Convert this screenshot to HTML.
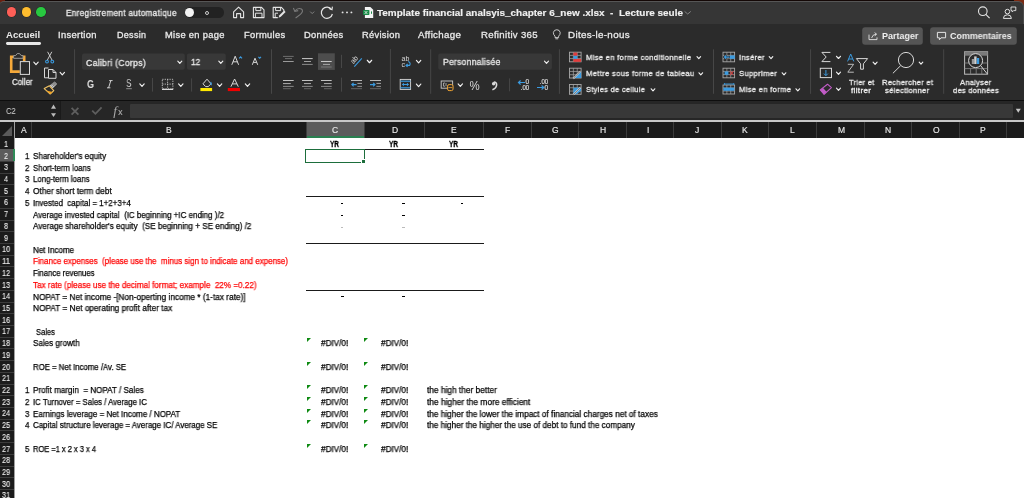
<!DOCTYPE html><html><head><meta charset="utf-8"><style>
*{margin:0;padding:0;box-sizing:border-box}
html,body{width:1024px;height:498px;overflow:hidden;background:#fff;font-family:"Liberation Sans",sans-serif}
.a{position:absolute}
.t{position:absolute;white-space:pre;line-height:1;transform-origin:0 0;will-change:transform}
svg{position:absolute;overflow:visible;will-change:transform}
</style></head><body>
<div class="a" style="left:0;top:0;width:1024px;height:24px;background:#363636"></div>
<div class="a" style="left:0;top:0;width:1024px;height:1.3px;background:#140806"></div>
<div class="a" style="left:0;top:0;width:5px;height:2px;background:#6a2010"></div>
<div class="a" style="left:1014px;top:0;width:10px;height:5px;background:#7a2a12"></div>
<div class="a" style="left:0;top:1.3px;width:1024px;height:23px;background:#363636;border-top:0.8px solid #565656;border-right:1px solid #4a4a4a;border-radius:4px 6px 0 0"></div>
<div class="a" style="left:0;top:24px;width:1024px;height:76px;background:#2b2b2b"></div>
<div class="a" style="left:6.8px;top:7.3px;width:9.6px;height:9.6px;border-radius:50%;background:#fe5f57;box-shadow:0 0 0 0.5px rgba(0,0,0,0.35)"></div>
<div class="a" style="left:21.599999999999998px;top:7.3px;width:9.6px;height:9.6px;border-radius:50%;background:#febc2e;box-shadow:0 0 0 0.5px rgba(0,0,0,0.35)"></div>
<div class="a" style="left:36.2px;top:7.3px;width:9.6px;height:9.6px;border-radius:50%;background:#28c840;box-shadow:0 0 0 0.5px rgba(0,0,0,0.35)"></div>
<div class="t" style="left:65.50px;top:9.12px;font-size:8.6px;font-weight:normal;color:#e6e6e6;transform:scaleX(0.9465);-webkit-text-stroke:0.35px #e6e6e6;letter-spacing:0.35px;">Enregistrement automatique</div>
<div class="a" style="left:184.8px;top:7px;width:39.4px;height:10.6px;border-radius:5.3px;background:#222"></div>
<div class="a" style="left:184.9px;top:7.5px;width:9.4px;height:9.4px;border-radius:50%;background:#f4f4f4"></div>
<div class="a" style="left:205px;top:10.5px;width:4px;height:4px;border-radius:50%;border:1px solid #ccc"></div>
<div class="t" style="left:377.00px;top:8.26px;font-size:9.5px;font-weight:bold;color:#f0f0f0;transform:scaleX(1.0467);-webkit-text-stroke:0.15px #f0f0f0;">Template financial analsyis_chapter 6_new .xlsx  -  Lecture seule</div>
<div class="t" style="left:6.25px;top:30.16px;font-size:9.5px;font-weight:bold;color:#e8e8e8;transform:scaleX(1.0104);">Accueil</div>
<div class="t" style="left:58.20px;top:30.58px;font-size:9px;font-weight:normal;color:#e8e8e8;transform:scaleX(1.0420);-webkit-text-stroke:0.3px #e8e8e8;letter-spacing:0.3px;">Insertion</div>
<div class="t" style="left:116.80px;top:30.58px;font-size:9px;font-weight:normal;color:#e8e8e8;transform:scaleX(0.9962);-webkit-text-stroke:0.3px #e8e8e8;letter-spacing:0.3px;">Dessin</div>
<div class="t" style="left:165.30px;top:30.58px;font-size:9px;font-weight:normal;color:#e8e8e8;transform:scaleX(1.0357);-webkit-text-stroke:0.3px #e8e8e8;letter-spacing:0.3px;">Mise en page</div>
<div class="t" style="left:243.60px;top:30.58px;font-size:9px;font-weight:normal;color:#e8e8e8;transform:scaleX(1.0370);-webkit-text-stroke:0.3px #e8e8e8;letter-spacing:0.3px;">Formules</div>
<div class="t" style="left:304.00px;top:30.58px;font-size:9px;font-weight:normal;color:#e8e8e8;transform:scaleX(1.0383);-webkit-text-stroke:0.3px #e8e8e8;letter-spacing:0.3px;">Données</div>
<div class="t" style="left:361.70px;top:30.58px;font-size:9px;font-weight:normal;color:#e8e8e8;transform:scaleX(1.0346);-webkit-text-stroke:0.3px #e8e8e8;letter-spacing:0.3px;">Révision</div>
<div class="t" style="left:418.30px;top:30.58px;font-size:9px;font-weight:normal;color:#e8e8e8;transform:scaleX(1.0758);-webkit-text-stroke:0.3px #e8e8e8;letter-spacing:0.3px;">Affichage</div>
<div class="t" style="left:481.40px;top:30.58px;font-size:9px;font-weight:normal;color:#e8e8e8;transform:scaleX(1.0648);-webkit-text-stroke:0.3px #e8e8e8;letter-spacing:0.3px;">Refinitiv 365</div>
<div class="t" style="left:567.60px;top:30.58px;font-size:9px;font-weight:normal;color:#e8e8e8;transform:scaleX(1.0875);-webkit-text-stroke:0.3px #e8e8e8;letter-spacing:0.3px;">Dites-le-nous</div>
<div class="a" style="left:6.2px;top:42.2px;width:34.6px;height:2.7px;border-radius:1.4px;background:#e8e8e8"></div>
<div class="a" style="left:0;top:100px;width:1024px;height:1.4px;background:#0e0e0e"></div>
<div class="a" style="left:0;top:101px;width:1024px;height:18.5px;background:#262626"></div>
<div class="a" style="left:0;top:101px;width:60px;height:18.5px;background:#202020"></div>
<div class="t" style="left:5.50px;top:106.16px;font-size:9.5px;font-weight:normal;color:#d8d8d8;transform:scaleX(0.7979);">C2</div>
<div class="a" style="left:129.7px;top:103.8px;width:883.6px;height:14px;background:#383838;border-radius:1px"></div>
<div class="a" style="left:0;top:119.5px;width:1024px;height:2.3px;background:#c8c8c8"></div>
<div class="a" style="left:0;top:121.8px;width:1024px;height:15.9px;background:#1b1b1b"></div>
<div class="a" style="left:0;top:137.67px;width:14px;height:361px;background:#1b1b1b"></div>
<div class="a" style="left:14px;top:121.8px;width:1px;height:377px;background:#a0a0a0"></div>
<svg style="left:0;top:121.8px" width="14" height="16"><polygon points="2,14 12,4 12,14" fill="#5a5a5a"/></svg>
<div class="a" style="left:306.1px;top:121.8px;width:57.9px;height:15.9px;background:#5c5c5c"></div>
<div class="a" style="left:306.1px;top:136.4px;width:57.9px;height:1.3px;background:#2a8050"></div>
<div class="a" style="left:31.20px;top:121.8px;width:1px;height:15.9px;background:#3c3c3c"></div>
<div class="t" style="left:20.55px;top:126.40px;font-size:8.5px;font-weight:normal;color:#e8e8e8;-webkit-text-stroke:0.15px #e8e8e8;">A</div>
<div class="a" style="left:305.60px;top:121.8px;width:1px;height:15.9px;background:#3c3c3c"></div>
<div class="t" style="left:166.10px;top:126.40px;font-size:8.5px;font-weight:normal;color:#e8e8e8;-webkit-text-stroke:0.15px #e8e8e8;">B</div>
<div class="a" style="left:363.50px;top:121.8px;width:1px;height:15.9px;background:#3c3c3c"></div>
<div class="t" style="left:332.25px;top:126.40px;font-size:8.5px;font-weight:normal;color:#e8e8e8;-webkit-text-stroke:0.15px #e8e8e8;">C</div>
<div class="a" style="left:424.20px;top:121.8px;width:1px;height:15.9px;background:#3c3c3c"></div>
<div class="t" style="left:391.55px;top:126.40px;font-size:8.5px;font-weight:normal;color:#e8e8e8;-webkit-text-stroke:0.15px #e8e8e8;">D</div>
<div class="a" style="left:483.10px;top:121.8px;width:1px;height:15.9px;background:#3c3c3c"></div>
<div class="t" style="left:451.35px;top:126.40px;font-size:8.5px;font-weight:normal;color:#e8e8e8;-webkit-text-stroke:0.15px #e8e8e8;">E</div>
<div class="a" style="left:530.90px;top:121.8px;width:1px;height:15.9px;background:#3c3c3c"></div>
<div class="t" style="left:504.70px;top:126.40px;font-size:8.5px;font-weight:normal;color:#e8e8e8;-webkit-text-stroke:0.15px #e8e8e8;">F</div>
<div class="a" style="left:578.10px;top:121.8px;width:1px;height:15.9px;background:#3c3c3c"></div>
<div class="t" style="left:552.20px;top:126.40px;font-size:8.5px;font-weight:normal;color:#e8e8e8;-webkit-text-stroke:0.15px #e8e8e8;">G</div>
<div class="a" style="left:626.10px;top:121.8px;width:1px;height:15.9px;background:#3c3c3c"></div>
<div class="t" style="left:599.80px;top:126.40px;font-size:8.5px;font-weight:normal;color:#e8e8e8;-webkit-text-stroke:0.15px #e8e8e8;">H</div>
<div class="a" style="left:673.10px;top:121.8px;width:1px;height:15.9px;background:#3c3c3c"></div>
<div class="t" style="left:647.30px;top:126.40px;font-size:8.5px;font-weight:normal;color:#e8e8e8;-webkit-text-stroke:0.15px #e8e8e8;">I</div>
<div class="a" style="left:720.80px;top:121.8px;width:1px;height:15.9px;background:#3c3c3c"></div>
<div class="t" style="left:694.65px;top:126.40px;font-size:8.5px;font-weight:normal;color:#e8e8e8;-webkit-text-stroke:0.15px #e8e8e8;">J</div>
<div class="a" style="left:767.80px;top:121.8px;width:1px;height:15.9px;background:#3c3c3c"></div>
<div class="t" style="left:742.00px;top:126.40px;font-size:8.5px;font-weight:normal;color:#e8e8e8;-webkit-text-stroke:0.15px #e8e8e8;">K</div>
<div class="a" style="left:816.00px;top:121.8px;width:1px;height:15.9px;background:#3c3c3c"></div>
<div class="t" style="left:789.60px;top:126.40px;font-size:8.5px;font-weight:normal;color:#e8e8e8;-webkit-text-stroke:0.15px #e8e8e8;">L</div>
<div class="a" style="left:863.80px;top:121.8px;width:1px;height:15.9px;background:#3c3c3c"></div>
<div class="t" style="left:837.60px;top:126.40px;font-size:8.5px;font-weight:normal;color:#e8e8e8;-webkit-text-stroke:0.15px #e8e8e8;">M</div>
<div class="a" style="left:911.00px;top:121.8px;width:1px;height:15.9px;background:#3c3c3c"></div>
<div class="t" style="left:885.10px;top:126.40px;font-size:8.5px;font-weight:normal;color:#e8e8e8;-webkit-text-stroke:0.15px #e8e8e8;">N</div>
<div class="a" style="left:958.90px;top:121.8px;width:1px;height:15.9px;background:#3c3c3c"></div>
<div class="t" style="left:932.65px;top:126.40px;font-size:8.5px;font-weight:normal;color:#e8e8e8;-webkit-text-stroke:0.15px #e8e8e8;">O</div>
<div class="a" style="left:1005.90px;top:121.8px;width:1px;height:15.9px;background:#3c3c3c"></div>
<div class="t" style="left:980.10px;top:126.40px;font-size:8.5px;font-weight:normal;color:#e8e8e8;-webkit-text-stroke:0.15px #e8e8e8;">P</div>
<div class="a" style="left:1059.50px;top:121.8px;width:1px;height:15.9px;background:#3c3c3c"></div>
<div class="t" style="left:1030.40px;top:126.40px;font-size:8.5px;font-weight:normal;color:#e8e8e8;-webkit-text-stroke:0.15px #e8e8e8;">Q</div>
<div class="a" style="left:0;top:149.20px;width:14px;height:1px;background:#3c3c3c"></div>
<div class="t" style="left:3.85px;top:139.85px;font-size:9px;font-weight:normal;color:#f4f4f4;transform:scaleX(0.8174);-webkit-text-stroke:0.1px #f4f4f4;">1</div>
<div class="a" style="left:0;top:149.40px;width:14px;height:11.72px;background:#5c5c5c"></div>
<div class="a" style="left:12.6px;top:149.40px;width:2px;height:11.72px;background:#2e8b57"></div>
<div class="a" style="left:0;top:160.92px;width:14px;height:1px;background:#3c3c3c"></div>
<div class="t" style="left:3.85px;top:151.58px;font-size:9px;font-weight:normal;color:#f4f4f4;transform:scaleX(0.8174);-webkit-text-stroke:0.1px #f4f4f4;">2</div>
<div class="a" style="left:0;top:172.64px;width:14px;height:1px;background:#3c3c3c"></div>
<div class="t" style="left:3.85px;top:163.30px;font-size:9px;font-weight:normal;color:#f4f4f4;transform:scaleX(0.8174);-webkit-text-stroke:0.1px #f4f4f4;">3</div>
<div class="a" style="left:0;top:184.36px;width:14px;height:1px;background:#3c3c3c"></div>
<div class="t" style="left:3.85px;top:175.02px;font-size:9px;font-weight:normal;color:#f4f4f4;transform:scaleX(0.8174);-webkit-text-stroke:0.1px #f4f4f4;">4</div>
<div class="a" style="left:0;top:196.08px;width:14px;height:1px;background:#3c3c3c"></div>
<div class="t" style="left:3.85px;top:186.74px;font-size:9px;font-weight:normal;color:#f4f4f4;transform:scaleX(0.8174);-webkit-text-stroke:0.1px #f4f4f4;">5</div>
<div class="a" style="left:0;top:207.80px;width:14px;height:1px;background:#3c3c3c"></div>
<div class="t" style="left:3.85px;top:198.46px;font-size:9px;font-weight:normal;color:#f4f4f4;transform:scaleX(0.8174);-webkit-text-stroke:0.1px #f4f4f4;">6</div>
<div class="a" style="left:0;top:219.52px;width:14px;height:1px;background:#3c3c3c"></div>
<div class="t" style="left:3.85px;top:210.18px;font-size:9px;font-weight:normal;color:#f4f4f4;transform:scaleX(0.8174);-webkit-text-stroke:0.1px #f4f4f4;">7</div>
<div class="a" style="left:0;top:231.24px;width:14px;height:1px;background:#3c3c3c"></div>
<div class="t" style="left:3.85px;top:221.90px;font-size:9px;font-weight:normal;color:#f4f4f4;transform:scaleX(0.8174);-webkit-text-stroke:0.1px #f4f4f4;">8</div>
<div class="a" style="left:0;top:242.96px;width:14px;height:1px;background:#3c3c3c"></div>
<div class="t" style="left:3.85px;top:233.62px;font-size:9px;font-weight:normal;color:#f4f4f4;transform:scaleX(0.8174);-webkit-text-stroke:0.1px #f4f4f4;">9</div>
<div class="a" style="left:0;top:254.68px;width:14px;height:1px;background:#3c3c3c"></div>
<div class="t" style="left:1.80px;top:245.34px;font-size:9px;font-weight:normal;color:#f4f4f4;transform:scaleX(0.8187);-webkit-text-stroke:0.1px #f4f4f4;">10</div>
<div class="a" style="left:0;top:266.40px;width:14px;height:1px;background:#3c3c3c"></div>
<div class="t" style="left:1.80px;top:257.06px;font-size:9px;font-weight:normal;color:#f4f4f4;transform:scaleX(0.8776);-webkit-text-stroke:0.1px #f4f4f4;">11</div>
<div class="a" style="left:0;top:278.12px;width:14px;height:1px;background:#3c3c3c"></div>
<div class="t" style="left:1.80px;top:268.78px;font-size:9px;font-weight:normal;color:#f4f4f4;transform:scaleX(0.8187);-webkit-text-stroke:0.1px #f4f4f4;">12</div>
<div class="a" style="left:0;top:289.84px;width:14px;height:1px;background:#3c3c3c"></div>
<div class="t" style="left:1.80px;top:280.50px;font-size:9px;font-weight:normal;color:#f4f4f4;transform:scaleX(0.8187);-webkit-text-stroke:0.1px #f4f4f4;">13</div>
<div class="a" style="left:0;top:301.56px;width:14px;height:1px;background:#3c3c3c"></div>
<div class="t" style="left:1.80px;top:292.22px;font-size:9px;font-weight:normal;color:#f4f4f4;transform:scaleX(0.8187);-webkit-text-stroke:0.1px #f4f4f4;">14</div>
<div class="a" style="left:0;top:313.28px;width:14px;height:1px;background:#3c3c3c"></div>
<div class="t" style="left:1.80px;top:303.94px;font-size:9px;font-weight:normal;color:#f4f4f4;transform:scaleX(0.8187);-webkit-text-stroke:0.1px #f4f4f4;">15</div>
<div class="a" style="left:0;top:325.00px;width:14px;height:1px;background:#3c3c3c"></div>
<div class="t" style="left:1.80px;top:315.66px;font-size:9px;font-weight:normal;color:#f4f4f4;transform:scaleX(0.8187);-webkit-text-stroke:0.1px #f4f4f4;">16</div>
<div class="a" style="left:0;top:336.72px;width:14px;height:1px;background:#3c3c3c"></div>
<div class="t" style="left:1.80px;top:327.38px;font-size:9px;font-weight:normal;color:#f4f4f4;transform:scaleX(0.8187);-webkit-text-stroke:0.1px #f4f4f4;">17</div>
<div class="a" style="left:0;top:348.44px;width:14px;height:1px;background:#3c3c3c"></div>
<div class="t" style="left:1.80px;top:339.10px;font-size:9px;font-weight:normal;color:#f4f4f4;transform:scaleX(0.8187);-webkit-text-stroke:0.1px #f4f4f4;">18</div>
<div class="a" style="left:0;top:360.16px;width:14px;height:1px;background:#3c3c3c"></div>
<div class="t" style="left:1.80px;top:350.82px;font-size:9px;font-weight:normal;color:#f4f4f4;transform:scaleX(0.8187);-webkit-text-stroke:0.1px #f4f4f4;">19</div>
<div class="a" style="left:0;top:371.88px;width:14px;height:1px;background:#3c3c3c"></div>
<div class="t" style="left:1.80px;top:362.54px;font-size:9px;font-weight:normal;color:#f4f4f4;transform:scaleX(0.8187);-webkit-text-stroke:0.1px #f4f4f4;">20</div>
<div class="a" style="left:0;top:383.60px;width:14px;height:1px;background:#3c3c3c"></div>
<div class="t" style="left:1.80px;top:374.26px;font-size:9px;font-weight:normal;color:#f4f4f4;transform:scaleX(0.8187);-webkit-text-stroke:0.1px #f4f4f4;">21</div>
<div class="a" style="left:0;top:395.32px;width:14px;height:1px;background:#3c3c3c"></div>
<div class="t" style="left:1.80px;top:385.98px;font-size:9px;font-weight:normal;color:#f4f4f4;transform:scaleX(0.8187);-webkit-text-stroke:0.1px #f4f4f4;">22</div>
<div class="a" style="left:0;top:407.04px;width:14px;height:1px;background:#3c3c3c"></div>
<div class="t" style="left:1.80px;top:397.70px;font-size:9px;font-weight:normal;color:#f4f4f4;transform:scaleX(0.8187);-webkit-text-stroke:0.1px #f4f4f4;">23</div>
<div class="a" style="left:0;top:418.76px;width:14px;height:1px;background:#3c3c3c"></div>
<div class="t" style="left:1.80px;top:409.42px;font-size:9px;font-weight:normal;color:#f4f4f4;transform:scaleX(0.8187);-webkit-text-stroke:0.1px #f4f4f4;">24</div>
<div class="a" style="left:0;top:430.48px;width:14px;height:1px;background:#3c3c3c"></div>
<div class="t" style="left:1.80px;top:421.14px;font-size:9px;font-weight:normal;color:#f4f4f4;transform:scaleX(0.8187);-webkit-text-stroke:0.1px #f4f4f4;">25</div>
<div class="a" style="left:0;top:442.20px;width:14px;height:1px;background:#3c3c3c"></div>
<div class="t" style="left:1.80px;top:432.86px;font-size:9px;font-weight:normal;color:#f4f4f4;transform:scaleX(0.8187);-webkit-text-stroke:0.1px #f4f4f4;">26</div>
<div class="a" style="left:0;top:453.92px;width:14px;height:1px;background:#3c3c3c"></div>
<div class="t" style="left:1.80px;top:444.58px;font-size:9px;font-weight:normal;color:#f4f4f4;transform:scaleX(0.8187);-webkit-text-stroke:0.1px #f4f4f4;">27</div>
<div class="a" style="left:0;top:465.64px;width:14px;height:1px;background:#3c3c3c"></div>
<div class="t" style="left:1.80px;top:456.30px;font-size:9px;font-weight:normal;color:#f4f4f4;transform:scaleX(0.8187);-webkit-text-stroke:0.1px #f4f4f4;">28</div>
<div class="a" style="left:0;top:477.36px;width:14px;height:1px;background:#3c3c3c"></div>
<div class="t" style="left:1.80px;top:468.02px;font-size:9px;font-weight:normal;color:#f4f4f4;transform:scaleX(0.8187);-webkit-text-stroke:0.1px #f4f4f4;">29</div>
<div class="a" style="left:0;top:489.08px;width:14px;height:1px;background:#3c3c3c"></div>
<div class="t" style="left:1.80px;top:479.74px;font-size:9px;font-weight:normal;color:#f4f4f4;transform:scaleX(0.8187);-webkit-text-stroke:0.1px #f4f4f4;">30</div>
<div class="a" style="left:0;top:500.80px;width:14px;height:1px;background:#3c3c3c"></div>
<div class="t" style="left:1.80px;top:491.46px;font-size:9px;font-weight:normal;color:#f4f4f4;transform:scaleX(0.8187);-webkit-text-stroke:0.1px #f4f4f4;">31</div>
<div class="t" style="left:25.10px;top:151.90px;font-size:8.5px;font-weight:normal;color:#000;transform:scaleX(0.92);-webkit-text-stroke:0.25px #000;">1</div>
<div class="t" style="left:32.80px;top:151.90px;font-size:8.5px;font-weight:normal;color:#000;transform:scaleX(0.9478);-webkit-text-stroke:0.25px #000;">Shareholder's equity</div>
<div class="t" style="left:25.10px;top:163.62px;font-size:8.5px;font-weight:normal;color:#000;transform:scaleX(0.92);-webkit-text-stroke:0.25px #000;">2</div>
<div class="t" style="left:32.80px;top:163.62px;font-size:8.5px;font-weight:normal;color:#000;transform:scaleX(0.92);-webkit-text-stroke:0.25px #000;">Short-term loans</div>
<div class="t" style="left:25.10px;top:175.34px;font-size:8.5px;font-weight:normal;color:#000;transform:scaleX(0.92);-webkit-text-stroke:0.25px #000;">3</div>
<div class="t" style="left:32.80px;top:175.34px;font-size:8.5px;font-weight:normal;color:#000;transform:scaleX(0.92);-webkit-text-stroke:0.25px #000;">Long-term loans</div>
<div class="t" style="left:25.10px;top:187.06px;font-size:8.5px;font-weight:normal;color:#000;transform:scaleX(0.92);-webkit-text-stroke:0.25px #000;">4</div>
<div class="t" style="left:33.00px;top:187.06px;font-size:8.5px;font-weight:normal;color:#000;transform:scaleX(0.9740);-webkit-text-stroke:0.25px #000;">Other short term debt</div>
<div class="t" style="left:25.10px;top:198.78px;font-size:8.5px;font-weight:normal;color:#000;transform:scaleX(0.92);-webkit-text-stroke:0.25px #000;">5</div>
<div class="t" style="left:33.00px;top:198.78px;font-size:8.5px;font-weight:normal;color:#000;transform:scaleX(0.9321);-webkit-text-stroke:0.25px #000;">Invested  capital = 1+2+3+4</div>
<div class="t" style="left:33.00px;top:210.50px;font-size:8.5px;font-weight:normal;color:#000;transform:scaleX(0.9375);-webkit-text-stroke:0.25px #000;">Average invested capital  (IC beginning +IC ending )/2</div>
<div class="t" style="left:33.00px;top:222.22px;font-size:8.5px;font-weight:normal;color:#000;transform:scaleX(0.9533);-webkit-text-stroke:0.25px #000;">Average shareholder's equity  (SE beginning + SE ending) /2</div>
<div class="t" style="left:33.00px;top:245.66px;font-size:8.5px;font-weight:normal;color:#000;transform:scaleX(0.9432);-webkit-text-stroke:0.25px #000;">Net Income</div>
<div class="t" style="left:33.00px;top:257.38px;font-size:8.5px;font-weight:normal;color:#ff0000;transform:scaleX(0.9369);-webkit-text-stroke:0.25px #ff0000;">Finance expenses  (please use the  minus sign to indicate and expense)</div>
<div class="t" style="left:33.00px;top:269.10px;font-size:8.5px;font-weight:normal;color:#000;transform:scaleX(0.9115);-webkit-text-stroke:0.25px #000;">Finance revenues</div>
<div class="t" style="left:33.00px;top:280.82px;font-size:8.5px;font-weight:normal;color:#ff0000;transform:scaleX(0.9551);-webkit-text-stroke:0.25px #ff0000;">Tax rate (please use the decimal format; example  22% =0.22)</div>
<div class="t" style="left:33.00px;top:292.54px;font-size:8.5px;font-weight:normal;color:#000;transform:scaleX(0.9705);-webkit-text-stroke:0.25px #000;">NOPAT = Net income -[Non-operting income * (1-tax rate)]</div>
<div class="t" style="left:33.00px;top:304.26px;font-size:8.5px;font-weight:normal;color:#000;transform:scaleX(0.9740);-webkit-text-stroke:0.25px #000;">NOPAT = Net operating profit after tax</div>
<div class="t" style="left:35.50px;top:327.70px;font-size:8.5px;font-weight:normal;color:#000;transform:scaleX(0.8888);-webkit-text-stroke:0.25px #000;">Sales</div>
<div class="t" style="left:32.90px;top:339.42px;font-size:8.5px;font-weight:normal;color:#000;transform:scaleX(0.9483);-webkit-text-stroke:0.25px #000;">Sales growth</div>
<div class="t" style="left:33.00px;top:362.86px;font-size:8.5px;font-weight:normal;color:#000;transform:scaleX(0.9172);-webkit-text-stroke:0.25px #000;">ROE = Net Income /Av. SE</div>
<div class="t" style="left:25.20px;top:386.30px;font-size:8.5px;font-weight:normal;color:#000;transform:scaleX(0.92);-webkit-text-stroke:0.25px #000;">1</div>
<div class="t" style="left:33.30px;top:386.30px;font-size:8.5px;font-weight:normal;color:#000;transform:scaleX(0.9506);-webkit-text-stroke:0.25px #000;">Profit margin  = NOPAT / Sales</div>
<div class="t" style="left:25.20px;top:398.02px;font-size:8.5px;font-weight:normal;color:#000;transform:scaleX(0.92);-webkit-text-stroke:0.25px #000;">2</div>
<div class="t" style="left:33.30px;top:398.02px;font-size:8.5px;font-weight:normal;color:#000;transform:scaleX(0.9160);-webkit-text-stroke:0.25px #000;">IC Turnover = Sales / Average IC</div>
<div class="t" style="left:25.20px;top:409.74px;font-size:8.5px;font-weight:normal;color:#000;transform:scaleX(0.92);-webkit-text-stroke:0.25px #000;">3</div>
<div class="t" style="left:33.30px;top:409.74px;font-size:8.5px;font-weight:normal;color:#000;transform:scaleX(0.9389);-webkit-text-stroke:0.25px #000;">Earnings leverage = Net Income / NOPAT</div>
<div class="t" style="left:25.20px;top:421.46px;font-size:8.5px;font-weight:normal;color:#000;transform:scaleX(0.92);-webkit-text-stroke:0.25px #000;">4</div>
<div class="t" style="left:33.30px;top:421.46px;font-size:8.5px;font-weight:normal;color:#000;transform:scaleX(0.9312);-webkit-text-stroke:0.25px #000;">Capital structure leverage = Average IC/ Average SE</div>
<div class="t" style="left:25.20px;top:444.90px;font-size:8.5px;font-weight:normal;color:#000;transform:scaleX(0.92);-webkit-text-stroke:0.25px #000;">5</div>
<div class="t" style="left:33.30px;top:444.90px;font-size:8.5px;font-weight:normal;color:#000;transform:scaleX(0.8802);-webkit-text-stroke:0.25px #000;">ROE =1 x 2 x 3 x 4</div>
<div class="t" style="left:427.10px;top:386.30px;font-size:8.5px;font-weight:normal;color:#000;transform:scaleX(0.9795);-webkit-text-stroke:0.25px #000;">the high ther better</div>
<div class="t" style="left:427.10px;top:398.02px;font-size:8.5px;font-weight:normal;color:#000;transform:scaleX(0.9827);-webkit-text-stroke:0.25px #000;">the higher the more efficient</div>
<div class="t" style="left:427.10px;top:409.74px;font-size:8.5px;font-weight:normal;color:#000;transform:scaleX(0.9688);-webkit-text-stroke:0.25px #000;">the higher the lower the impact of financial charges net of taxes</div>
<div class="t" style="left:427.10px;top:421.46px;font-size:8.5px;font-weight:normal;color:#000;transform:scaleX(0.9622);-webkit-text-stroke:0.25px #000;">the higher the higher the use of debt to fund the company</div>
<div class="t" style="left:329.70px;top:139.58px;font-size:9px;font-weight:bold;color:#000;transform:scaleX(0.7111);-webkit-text-stroke:0.3px #000;">YR</div>
<div class="t" style="left:389.00px;top:139.58px;font-size:9px;font-weight:bold;color:#000;transform:scaleX(0.7191);-webkit-text-stroke:0.3px #000;">YR</div>
<div class="t" style="left:449.00px;top:139.58px;font-size:9px;font-weight:bold;color:#000;transform:scaleX(0.7191);-webkit-text-stroke:0.3px #000;">YR</div>
<div class="a" style="left:306px;top:148.90px;width:178px;height:1px;background:#1a1a1a"></div>
<div class="a" style="left:306px;top:196.00px;width:178px;height:1px;background:#1a1a1a"></div>
<div class="a" style="left:306px;top:242.90px;width:178px;height:1px;background:#1a1a1a"></div>
<div class="a" style="left:306px;top:289.70px;width:178px;height:1px;background:#1a1a1a"></div>
<div class="a" style="left:340.8px;top:202.9px;width:2.6px;height:1.1px;background:#000"></div>
<div class="a" style="left:402.0px;top:202.9px;width:2.6px;height:1.1px;background:#000"></div>
<div class="a" style="left:460.7px;top:202.9px;width:2.6px;height:1.1px;background:#000"></div>
<div class="a" style="left:340.8px;top:214.5px;width:2.6px;height:1.1px;background:#000"></div>
<div class="a" style="left:402.0px;top:214.5px;width:2.6px;height:1.1px;background:#000"></div>
<div class="a" style="left:340.8px;top:226.6px;width:2.6px;height:1.1px;background:#bbb"></div>
<div class="a" style="left:402.0px;top:226.6px;width:2.6px;height:1.1px;background:#bbb"></div>
<div class="a" style="left:341.4px;top:296.4px;width:2.6px;height:1.1px;background:#000"></div>
<div class="a" style="left:402.4px;top:296.4px;width:2.6px;height:1.1px;background:#000"></div>
<svg style="left:307.0px;top:338.42px" width="4" height="4"><polygon points="0,0 4,0 0,4" fill="#0e8a12"/></svg>
<div class="t" style="left:321.30px;top:339.42px;font-size:8.5px;font-weight:normal;color:#000;transform:scaleX(0.9626);-webkit-text-stroke:0.25px #000;">#DIV/0!</div>
<svg style="left:364.1px;top:338.42px" width="4" height="4"><polygon points="0,0 4,0 0,4" fill="#0e8a12"/></svg>
<div class="t" style="left:380.70px;top:339.42px;font-size:8.5px;font-weight:normal;color:#000;transform:scaleX(0.9626);-webkit-text-stroke:0.25px #000;">#DIV/0!</div>
<svg style="left:307.0px;top:361.86px" width="4" height="4"><polygon points="0,0 4,0 0,4" fill="#0e8a12"/></svg>
<div class="t" style="left:321.30px;top:362.86px;font-size:8.5px;font-weight:normal;color:#000;transform:scaleX(0.9626);-webkit-text-stroke:0.25px #000;">#DIV/0!</div>
<svg style="left:364.1px;top:361.86px" width="4" height="4"><polygon points="0,0 4,0 0,4" fill="#0e8a12"/></svg>
<div class="t" style="left:380.70px;top:362.86px;font-size:8.5px;font-weight:normal;color:#000;transform:scaleX(0.9626);-webkit-text-stroke:0.25px #000;">#DIV/0!</div>
<svg style="left:307.0px;top:385.30px" width="4" height="4"><polygon points="0,0 4,0 0,4" fill="#0e8a12"/></svg>
<div class="t" style="left:321.30px;top:386.30px;font-size:8.5px;font-weight:normal;color:#000;transform:scaleX(0.9626);-webkit-text-stroke:0.25px #000;">#DIV/0!</div>
<svg style="left:364.1px;top:385.30px" width="4" height="4"><polygon points="0,0 4,0 0,4" fill="#0e8a12"/></svg>
<div class="t" style="left:380.70px;top:386.30px;font-size:8.5px;font-weight:normal;color:#000;transform:scaleX(0.9626);-webkit-text-stroke:0.25px #000;">#DIV/0!</div>
<svg style="left:307.0px;top:397.02px" width="4" height="4"><polygon points="0,0 4,0 0,4" fill="#0e8a12"/></svg>
<div class="t" style="left:321.30px;top:398.02px;font-size:8.5px;font-weight:normal;color:#000;transform:scaleX(0.9626);-webkit-text-stroke:0.25px #000;">#DIV/0!</div>
<svg style="left:364.1px;top:397.02px" width="4" height="4"><polygon points="0,0 4,0 0,4" fill="#0e8a12"/></svg>
<div class="t" style="left:380.70px;top:398.02px;font-size:8.5px;font-weight:normal;color:#000;transform:scaleX(0.9626);-webkit-text-stroke:0.25px #000;">#DIV/0!</div>
<svg style="left:307.0px;top:408.74px" width="4" height="4"><polygon points="0,0 4,0 0,4" fill="#0e8a12"/></svg>
<div class="t" style="left:321.30px;top:409.74px;font-size:8.5px;font-weight:normal;color:#000;transform:scaleX(0.9626);-webkit-text-stroke:0.25px #000;">#DIV/0!</div>
<svg style="left:364.1px;top:408.74px" width="4" height="4"><polygon points="0,0 4,0 0,4" fill="#0e8a12"/></svg>
<div class="t" style="left:380.70px;top:409.74px;font-size:8.5px;font-weight:normal;color:#000;transform:scaleX(0.9626);-webkit-text-stroke:0.25px #000;">#DIV/0!</div>
<svg style="left:307.0px;top:420.46px" width="4" height="4"><polygon points="0,0 4,0 0,4" fill="#0e8a12"/></svg>
<div class="t" style="left:321.30px;top:421.46px;font-size:8.5px;font-weight:normal;color:#000;transform:scaleX(0.9626);-webkit-text-stroke:0.25px #000;">#DIV/0!</div>
<svg style="left:364.1px;top:420.46px" width="4" height="4"><polygon points="0,0 4,0 0,4" fill="#0e8a12"/></svg>
<div class="t" style="left:380.70px;top:421.46px;font-size:8.5px;font-weight:normal;color:#000;transform:scaleX(0.9626);-webkit-text-stroke:0.25px #000;">#DIV/0!</div>
<svg style="left:307.0px;top:443.90px" width="4" height="4"><polygon points="0,0 4,0 0,4" fill="#0e8a12"/></svg>
<div class="t" style="left:321.30px;top:444.90px;font-size:8.5px;font-weight:normal;color:#000;transform:scaleX(0.9626);-webkit-text-stroke:0.25px #000;">#DIV/0!</div>
<svg style="left:364.1px;top:443.90px" width="4" height="4"><polygon points="0,0 4,0 0,4" fill="#0e8a12"/></svg>
<div class="t" style="left:380.70px;top:444.90px;font-size:8.5px;font-weight:normal;color:#000;transform:scaleX(0.9626);-webkit-text-stroke:0.25px #000;">#DIV/0!</div>
<div class="a" style="left:305.1px;top:149.0px;width:59.6px;height:13.7px;border:1.8px solid #1d6e3c;border-top-width:1.3px"></div>
<div class="a" style="left:361.8px;top:159.6px;width:3.4px;height:3.4px;background:#1d6e3c;outline:1px solid #fff"></div>
<svg style="left:0;top:0" width="1024" height="100"><line x1="74.6" y1="49.3" x2="74.6" y2="93.8" stroke="#474747" stroke-width="1"/><line x1="271.5" y1="49.3" x2="271.5" y2="93.8" stroke="#474747" stroke-width="1"/><line x1="430.7" y1="49.3" x2="430.7" y2="93.8" stroke="#474747" stroke-width="1"/><line x1="559.4" y1="49.3" x2="559.4" y2="93.8" stroke="#474747" stroke-width="1"/><line x1="713.5" y1="49.3" x2="713.5" y2="93.8" stroke="#474747" stroke-width="1"/><line x1="810.6" y1="49.3" x2="810.6" y2="93.8" stroke="#474747" stroke-width="1"/><line x1="943.7" y1="49.3" x2="943.7" y2="93.8" stroke="#474747" stroke-width="1"/><line x1="390.4" y1="49" x2="390.4" y2="93.5" stroke="#474747" stroke-width="1"/><path d="M24.2,61 V56.8 H11.2 V71.6 H19.8" fill="none" stroke="#f5a93a" stroke-width="2.6"/><path d="M13.6,58.3 V55.6 H15.6 L17.2,53.6 H19.6 L21.2,55.6 H23.0 V58.3 Z" fill="#2b2b2b" stroke="#9a9a9a" stroke-width="1"/><rect x="20.3" y="61.6" width="9.2" height="12.8" fill="#2b2b2b" stroke="#d9d9d9" stroke-width="1"/><polyline points="33.80,62.15 36.00,64.65 38.20,62.15" fill="none" stroke="#f0f0f0" stroke-width="1.15" stroke-linecap="round" stroke-linejoin="round"/><path d="M47.6,51.8 L52,60 M51.8,51.8 L47.4,60" stroke="#d9d9d9" stroke-width="0.9" fill="none"/><circle cx="47" cy="61.6" r="1.4" fill="none" stroke="#3b9be0" stroke-width="1.1"/><circle cx="52.3" cy="61.6" r="1.4" fill="none" stroke="#3b9be0" stroke-width="1.1"/><path d="M48.5,68 H44.5 V77.8 H48" fill="none" stroke="#d9d9d9" stroke-width="1"/><path d="M48.5,69.5 H53 L56,72.5 V78.3 H48.5 Z M53,69.5 V72.5 H56" fill="none" stroke="#d9d9d9" stroke-width="1"/><polyline points="60.10,72.35 62.30,74.85 64.50,72.35" fill="none" stroke="#f0f0f0" stroke-width="1.15" stroke-linecap="round" stroke-linejoin="round"/><path d="M49.6,85.6 L54.6,81.4 L57,84 L52.6,88.6 Z" fill="#c8c8c8"/><path d="M51,85.4 L55,82 M52,86.8 L56,83.2 M52.2,83.4 L54.4,85.8 M53.6,82.4 L55.6,84.6" stroke="#555" stroke-width="0.6"/><path d="M44.2,88.6 L49.4,85.8 L53.8,90.6 L50.2,94 Z" fill="none" stroke="#f2c464" stroke-width="1.1" stroke-linejoin="round"/><path d="M46.2,90.6 L52.6,92 L50.2,94 Z" fill="#f0a020"/><rect x="82" y="53.4" width="102.8" height="16.4" rx="2" fill="#383838"/><rect x="186.9" y="53.4" width="38.9" height="16.4" rx="2" fill="#383838"/><polyline points="177.80,61.10 179.80,63.30 181.80,61.10" fill="none" stroke="#f0f0f0" stroke-width="1.15" stroke-linecap="round" stroke-linejoin="round"/><polyline points="218.80,61.10 220.80,63.30 222.80,61.10" fill="none" stroke="#f0f0f0" stroke-width="1.15" stroke-linecap="round" stroke-linejoin="round"/><path d="M231.8,64.8 L235.2,56.2 L238.6,64.8 M233,61.8 H237.4" fill="none" stroke="#d9d9d9" stroke-width="1"/><polyline points="239.2,58.4 240.6,56.8 242,58.4" fill="none" stroke="#3b9be0" stroke-width="1.1"/><path d="M252.3,64.8 L255,58.2 L257.7,64.8 M253.3,62.4 H256.7" fill="none" stroke="#d9d9d9" stroke-width="1"/><polyline points="258.4,56.8 259.7,58.2 261,56.8" fill="none" stroke="#3b9be0" stroke-width="1.1"/><polyline points="139.80,83.95 142.00,86.45 144.20,83.95" fill="none" stroke="#f0f0f0" stroke-width="1.15" stroke-linecap="round" stroke-linejoin="round"/><polyline points="178.60,83.95 180.80,86.45 183.00,83.95" fill="none" stroke="#f0f0f0" stroke-width="1.15" stroke-linecap="round" stroke-linejoin="round"/><polyline points="217.40,83.95 219.60,86.45 221.80,83.95" fill="none" stroke="#f0f0f0" stroke-width="1.15" stroke-linecap="round" stroke-linejoin="round"/><polyline points="245.30,83.95 247.50,86.45 249.70,83.95" fill="none" stroke="#f0f0f0" stroke-width="1.15" stroke-linecap="round" stroke-linejoin="round"/><line x1="152.5" y1="78" x2="152.5" y2="91.6" stroke="#474747" stroke-width="1"/><line x1="191.6" y1="78.4" x2="191.6" y2="91.6" stroke="#474747" stroke-width="1"/><path d="M110.8,80.6 L108.6,87.8 M109.2,80.6 H112.6 M107,87.8 H110.4" stroke="#cfcfcf" stroke-width="1" fill="none"/><line x1="126.2" y1="88.7" x2="131.8" y2="88.7" stroke="#9a9a9a" stroke-width="0.9"/><rect x="162.3" y="79.3" width="10.6" height="9.6" fill="none" stroke="#cfcfcf" stroke-width="0.9" stroke-dasharray="1.2 1.2"/><path d="M167.6,79.3 V88.9 M162.3,84.1 H172.9" stroke="#cfcfcf" stroke-width="0.9" stroke-dasharray="1.2 1.2"/><line x1="162" y1="89.4" x2="173.2" y2="89.4" stroke="#d9d9d9" stroke-width="1.2"/><path d="M203,83.8 L207,79.2 L211,83.8 L208.2,86.6 H205.6 Z" fill="none" stroke="#d9d9d9" stroke-width="1"/><path d="M210.6,82 Q211.8,83.8 210.9,85.2" fill="none" stroke="#3b9be0" stroke-width="1.3"/><rect x="200.4" y="88" width="11.7" height="3.1" fill="#ffe800"/><path d="M230.9,86.7 L234.6,79 L238.3,86.7 M232.3,83.9 H236.9" fill="none" stroke="#d9d9d9" stroke-width="1"/><rect x="227.8" y="88" width="12.2" height="3.1" fill="#f00000"/><rect x="318" y="53.3" width="16.8" height="16.6" fill="#4d4d4d"/><line x1="283" y1="56.4" x2="293.7" y2="56.4" stroke="#6e6e6e" stroke-width="1"/><line x1="285" y1="58.6" x2="292" y2="58.6" stroke="#6e6e6e" stroke-width="1"/><line x1="283" y1="61.5" x2="293.7" y2="61.5" stroke="#9a9a9a" stroke-width="1"/><line x1="302" y1="58.6" x2="312.7" y2="58.6" stroke="#c8c8c8" stroke-width="1"/><line x1="304" y1="61.5" x2="311" y2="61.5" stroke="#a0a0a0" stroke-width="1"/><line x1="302" y1="64.4" x2="312.7" y2="64.4" stroke="#8a8a8a" stroke-width="1"/><line x1="321" y1="61.5" x2="331.7" y2="61.5" stroke="#c8c8c8" stroke-width="1"/><line x1="323" y1="64.4" x2="330" y2="64.4" stroke="#a8a8a8" stroke-width="1"/><line x1="321" y1="67" x2="331.7" y2="67" stroke="#7a7a7a" stroke-width="1"/><line x1="283" y1="80.5" x2="293.7" y2="80.5" stroke="#c0c0c0" stroke-width="1"/><line x1="283" y1="83.6" x2="290.8" y2="83.6" stroke="#b0b0b0" stroke-width="1"/><line x1="283" y1="86.4" x2="293.7" y2="86.4" stroke="#8a8a8a" stroke-width="1"/><line x1="283" y1="88.7" x2="290.8" y2="88.7" stroke="#666" stroke-width="1"/><line x1="302" y1="80.5" x2="312.7" y2="80.5" stroke="#c0c0c0" stroke-width="1"/><line x1="304" y1="83.6" x2="311" y2="83.6" stroke="#b0b0b0" stroke-width="1"/><line x1="302" y1="86.4" x2="312.7" y2="86.4" stroke="#8a8a8a" stroke-width="1"/><line x1="304" y1="88.7" x2="311" y2="88.7" stroke="#666" stroke-width="1"/><line x1="321" y1="80.5" x2="331.7" y2="80.5" stroke="#c0c0c0" stroke-width="1"/><line x1="324" y1="83.6" x2="331.7" y2="83.6" stroke="#b0b0b0" stroke-width="1"/><line x1="321" y1="86.4" x2="331.7" y2="86.4" stroke="#8a8a8a" stroke-width="1"/><line x1="324" y1="88.7" x2="331.7" y2="88.7" stroke="#666" stroke-width="1"/><line x1="341.5" y1="54.8" x2="341.5" y2="68" stroke="#474747" stroke-width="1"/><line x1="341.5" y1="77.6" x2="341.5" y2="91.7" stroke="#474747" stroke-width="1"/><text x="0" y="0" font-family="Liberation Sans" font-size="7.2" fill="#d9d9d9" transform="translate(353.4,64.2) rotate(-50)">ab</text><line x1="354.3" y1="66.6" x2="361.8" y2="58.4" stroke="#3b9be0" stroke-width="1.1"/><polyline points="367.30,60.25 369.50,62.75 371.70,60.25" fill="none" stroke="#f0f0f0" stroke-width="1.15" stroke-linecap="round" stroke-linejoin="round"/><line x1="351" y1="80.5" x2="362" y2="80.5" stroke="#b8b8b8" stroke-width="1"/><line x1="357.4" y1="83.4" x2="362" y2="83.4" stroke="#a8a8a8" stroke-width="1"/><line x1="357.4" y1="86.4" x2="362" y2="86.4" stroke="#909090" stroke-width="1"/><line x1="351" y1="88.7" x2="362" y2="88.7" stroke="#666" stroke-width="1"/><path d="M356.5,84.6 H351.8 M353.6,82.8 L351.8,84.6 L353.6,86.4" fill="none" stroke="#3b9be0" stroke-width="1.1"/><line x1="370" y1="80.5" x2="381" y2="80.5" stroke="#b8b8b8" stroke-width="1"/><line x1="376.4" y1="83.4" x2="381" y2="83.4" stroke="#a8a8a8" stroke-width="1"/><line x1="376.4" y1="86.4" x2="381" y2="86.4" stroke="#909090" stroke-width="1"/><line x1="370" y1="88.7" x2="381" y2="88.7" stroke="#666" stroke-width="1"/><path d="M370,84.6 H375 M373.2,82.8 L375,84.6 L373.2,86.4" fill="none" stroke="#3b9be0" stroke-width="1.1"/><text x="401.6" y="61" font-family="Liberation Sans" font-size="7" fill="#d9d9d9">ab</text><text x="401.4" y="66.6" font-family="Liberation Sans" font-size="7" fill="#d9d9d9">c</text><path d="M408.2,61.5 Q411.2,62.8 409.6,65.4 H406.2 M407.6,64 L406,65.4 L407.6,66.8" fill="none" stroke="#3b9be0" stroke-width="1.1"/><polyline points="416.40,60.35 418.60,62.85 420.80,60.35" fill="none" stroke="#f0f0f0" stroke-width="1.15" stroke-linecap="round" stroke-linejoin="round"/><rect x="400.2" y="79.4" width="10.4" height="10" fill="none" stroke="#d9d9d9" stroke-width="0.9"/><line x1="400.4" y1="81.2" x2="410.4" y2="81.2" stroke="#3b9be0" stroke-width="1.2"/><line x1="400.4" y1="87.8" x2="410.4" y2="87.8" stroke="#3b9be0" stroke-width="1.2"/><path d="M402.4,84.5 H408.4 M403.8,83.1 L402.4,84.5 L403.8,85.9 M407,83.1 L408.4,84.5 L407,85.9" fill="none" stroke="#3b9be0" stroke-width="1"/><polyline points="416.40,84.05 418.60,86.55 420.80,84.05" fill="none" stroke="#f0f0f0" stroke-width="1.15" stroke-linecap="round" stroke-linejoin="round"/><rect x="438.2" y="53.4" width="113.7" height="16.3" rx="2" fill="#383838"/><polyline points="544.50,61.10 546.50,63.30 548.50,61.10" fill="none" stroke="#f0f0f0" stroke-width="1.15" stroke-linecap="round" stroke-linejoin="round"/><rect x="441.2" y="81" width="11.4" height="7.2" fill="none" stroke="#bdbdbd" stroke-width="1"/><path d="M443.5,83 V86.2 M443.5,83 H445 M443.5,86.2 H445 M446,83 V86.2" stroke="#bdbdbd" stroke-width="0.8" fill="none"/><rect x="447.6" y="84.6" width="5.4" height="6" rx="1.5" fill="#2b2b2b" stroke="#f2a532" stroke-width="1"/><line x1="448.4" y1="87.6" x2="452.2" y2="87.6" stroke="#f2a532" stroke-width="0.8"/><polyline points="458.10,83.95 460.30,86.45 462.50,83.95" fill="none" stroke="#f0f0f0" stroke-width="1.15" stroke-linecap="round" stroke-linejoin="round"/><text x="469.6" y="89.9" font-family="Liberation Sans" font-size="12.5" fill="#d9d9d9" transform="translate(469.6,0) scale(0.92,1) translate(-469.6,0)">%</text><path d="M493.8,82 Q496.8,82 496.6,85 Q496.3,88.3 492.4,89.8" fill="none" stroke="#d9d9d9" stroke-width="1.6"/><circle cx="493.6" cy="83.8" r="1.7" fill="#d9d9d9"/><line x1="509.6" y1="78.4" x2="509.6" y2="91.3" stroke="#474747" stroke-width="1"/><path d="M525,82.5 H518.6 M520.6,80.5 L518.4,82.5 L520.6,84.5" fill="none" stroke="#3b9be0" stroke-width="1.1"/><text x="525.4" y="83.8" textLength="3.6" lengthAdjust="spacingAndGlyphs" font-family="Liberation Sans" font-size="6.6" fill="#d9d9d9" stroke="#d9d9d9" stroke-width="0.2">0</text><text x="520.8" y="89.9" textLength="8.4" lengthAdjust="spacingAndGlyphs" font-family="Liberation Sans" font-size="6.6" fill="#d9d9d9" stroke="#d9d9d9" stroke-width="0.2">.00</text><text x="539.8" y="83.8" textLength="8.4" lengthAdjust="spacingAndGlyphs" font-family="Liberation Sans" font-size="6.6" fill="#d9d9d9" stroke="#d9d9d9" stroke-width="0.2">.00</text><text x="544.4" y="89.9" textLength="3.6" lengthAdjust="spacingAndGlyphs" font-family="Liberation Sans" font-size="6.6" fill="#d9d9d9" stroke="#d9d9d9" stroke-width="0.2">0</text><path d="M537,87.5 H543.6 M541.6,85.5 L543.8,87.5 L541.6,89.5" fill="none" stroke="#3b9be0" stroke-width="1.1"/><rect x="569.5" y="52.2" width="11.6" height="9.6" fill="none" stroke="#a8a8a8" stroke-width="0.9"/><line x1="573.3666666666667" y1="52.2" x2="573.3666666666667" y2="61.800000000000004" stroke="#a8a8a8" stroke-width="0.7"/><line x1="569.5" y1="55.400000000000006" x2="581.1" y2="55.400000000000006" stroke="#a8a8a8" stroke-width="0.7"/><line x1="577.2333333333333" y1="52.2" x2="577.2333333333333" y2="61.800000000000004" stroke="#a8a8a8" stroke-width="0.7"/><line x1="569.5" y1="58.6" x2="581.1" y2="58.6" stroke="#a8a8a8" stroke-width="0.7"/><rect x="573.4" y="52.6" width="3.9" height="3.2" fill="#e23b3b"/><rect x="573.4" y="55.8" width="3.9" height="3.2" fill="#3b9be0"/><rect x="573.4" y="58.9" width="7.7" height="2.9" fill="#e23b3b"/><rect x="569.5" y="68.2" width="11.6" height="9.8" fill="none" stroke="#a8a8a8" stroke-width="0.9"/><line x1="573.3666666666667" y1="68.2" x2="573.3666666666667" y2="78.0" stroke="#a8a8a8" stroke-width="0.7"/><line x1="569.5" y1="71.46666666666667" x2="581.1" y2="71.46666666666667" stroke="#a8a8a8" stroke-width="0.7"/><line x1="577.2333333333333" y1="68.2" x2="577.2333333333333" y2="78.0" stroke="#a8a8a8" stroke-width="0.7"/><line x1="569.5" y1="74.73333333333333" x2="581.1" y2="74.73333333333333" stroke="#a8a8a8" stroke-width="0.7"/><path d="M573.6,78 L581.1,71.5 V78 Z" fill="#3b9be0"/><path d="M573.2,78.6 L580.6,71.2" stroke="#d9d9d9" stroke-width="1.6"/><path d="M573.2,78.6 L580.6,71.2" stroke="#2b2b2b" stroke-width="0.5"/><rect x="569.5" y="84.5" width="11.6" height="9.8" fill="none" stroke="#a8a8a8" stroke-width="0.9"/><line x1="573.3666666666667" y1="84.5" x2="573.3666666666667" y2="94.3" stroke="#a8a8a8" stroke-width="0.7"/><line x1="569.5" y1="87.76666666666667" x2="581.1" y2="87.76666666666667" stroke="#a8a8a8" stroke-width="0.7"/><line x1="577.2333333333333" y1="84.5" x2="577.2333333333333" y2="94.3" stroke="#a8a8a8" stroke-width="0.7"/><line x1="569.5" y1="91.03333333333333" x2="581.1" y2="91.03333333333333" stroke="#a8a8a8" stroke-width="0.7"/><path d="M573.4,87.8 H581.1 V91 L576.5,94.3 H573.4 Z" fill="#3b9be0"/><path d="M573.2,94.8 L580.6,87.4" stroke="#d9d9d9" stroke-width="1.6"/><path d="M573.2,94.8 L580.6,87.4" stroke="#2b2b2b" stroke-width="0.5"/><polyline points="697.00,56.60 698.80,58.60 700.60,56.60" fill="none" stroke="#f0f0f0" stroke-width="1.15" stroke-linecap="round" stroke-linejoin="round"/><polyline points="699.00,72.80 700.80,74.80 702.60,72.80" fill="none" stroke="#f0f0f0" stroke-width="1.15" stroke-linecap="round" stroke-linejoin="round"/><polyline points="651.20,88.80 653.00,90.80 654.80,88.80" fill="none" stroke="#f0f0f0" stroke-width="1.15" stroke-linecap="round" stroke-linejoin="round"/><rect x="723" y="52.2" width="11.6" height="9.6" fill="none" stroke="#a8a8a8" stroke-width="0.9"/><line x1="726.8666666666667" y1="52.2" x2="726.8666666666667" y2="61.800000000000004" stroke="#a8a8a8" stroke-width="0.7"/><line x1="723" y1="55.400000000000006" x2="734.6" y2="55.400000000000006" stroke="#a8a8a8" stroke-width="0.7"/><line x1="730.7333333333333" y1="52.2" x2="730.7333333333333" y2="61.800000000000004" stroke="#a8a8a8" stroke-width="0.7"/><line x1="723" y1="58.6" x2="734.6" y2="58.6" stroke="#a8a8a8" stroke-width="0.7"/><rect x="730" y="55.4" width="4.8" height="3.4" fill="#3b9be0"/><path d="M729.6,57.1 H724.4 M726.4,55.1 L724.4,57.1 L726.4,59.1" fill="none" stroke="#2b2b2b" stroke-width="2.2"/><path d="M729.6,57.1 H724.4 M726.2,55.3 L724.4,57.1 L726.2,58.9" fill="none" stroke="#3b9be0" stroke-width="1.1"/><rect x="723" y="68.2" width="11.6" height="9.6" fill="none" stroke="#a8a8a8" stroke-width="0.9"/><line x1="726.8666666666667" y1="68.2" x2="726.8666666666667" y2="77.8" stroke="#a8a8a8" stroke-width="0.7"/><line x1="723" y1="71.4" x2="734.6" y2="71.4" stroke="#a8a8a8" stroke-width="0.7"/><line x1="730.7333333333333" y1="68.2" x2="730.7333333333333" y2="77.8" stroke="#a8a8a8" stroke-width="0.7"/><line x1="723" y1="74.60000000000001" x2="734.6" y2="74.60000000000001" stroke="#a8a8a8" stroke-width="0.7"/><rect x="724.6" y="71.4" width="3.8" height="3.4" fill="#3b9be0"/><path d="M729.8,71 L733.6,75.2 M733.6,71 L729.8,75.2" stroke="#e23b3b" stroke-width="1"/><rect x="723" y="85" width="11.6" height="9" fill="none" stroke="#a8a8a8" stroke-width="0.9"/><line x1="726.8666666666667" y1="85" x2="726.8666666666667" y2="94" stroke="#a8a8a8" stroke-width="0.7"/><line x1="723" y1="88.0" x2="734.6" y2="88.0" stroke="#a8a8a8" stroke-width="0.7"/><line x1="730.7333333333333" y1="85" x2="730.7333333333333" y2="94" stroke="#a8a8a8" stroke-width="0.7"/><line x1="723" y1="91.0" x2="734.6" y2="91.0" stroke="#a8a8a8" stroke-width="0.7"/><rect x="723.4" y="87.6" width="11" height="3.2" fill="#3b9be0"/><path d="M724.4,84 H733.8 M724.4,83 V85 M733.8,83 V85" stroke="#3b9be0" stroke-width="0.9"/><polyline points="769.20,56.60 771.00,58.60 772.80,56.60" fill="none" stroke="#f0f0f0" stroke-width="1.15" stroke-linecap="round" stroke-linejoin="round"/><polyline points="782.20,72.80 784.00,74.80 785.80,72.80" fill="none" stroke="#f0f0f0" stroke-width="1.15" stroke-linecap="round" stroke-linejoin="round"/><polyline points="796.00,88.80 797.80,90.80 799.60,88.80" fill="none" stroke="#f0f0f0" stroke-width="1.15" stroke-linecap="round" stroke-linejoin="round"/><path d="M830.4,52.4 H821.9 L826.2,57 L821.9,61.6 H830.4" fill="none" stroke="#d9d9d9" stroke-width="1"/><polyline points="836.50,56.30 838.50,58.50 840.50,56.30" fill="none" stroke="#f0f0f0" stroke-width="1.15" stroke-linecap="round" stroke-linejoin="round"/><rect x="820.3" y="68.3" width="11.2" height="9.3" fill="none" stroke="#d9d9d9" stroke-width="1"/><path d="M825.9,70 V75.6 M823.9,73.6 L825.9,75.6 L827.9,73.6" fill="none" stroke="#3b9be0" stroke-width="1"/><polyline points="836.50,72.20 838.50,74.40 840.50,72.20" fill="none" stroke="#f0f0f0" stroke-width="1.15" stroke-linecap="round" stroke-linejoin="round"/><path d="M820.3,89.9 L827.5,84.2 L831.4,87.6 L824.1,94.3 Z" fill="none" stroke="#c25cc7" stroke-width="1.1" stroke-linejoin="round"/><path d="M820.3,89.9 L822.9,87.8 L826.7,91.9 L824.1,94.3 Z" fill="#c25cc7"/><polyline points="836.50,88.10 838.50,90.30 840.50,88.10" fill="none" stroke="#f0f0f0" stroke-width="1.15" stroke-linecap="round" stroke-linejoin="round"/><path d="M847.6,61.4 L850.7,54 L853.8,61.4 M848.6,59 H852.8" fill="none" stroke="#3b9be0" stroke-width="1"/><path d="M847.8,64.3 H853.6 L847.8,72.2 H853.8" fill="none" stroke="#bdbdbd" stroke-width="1"/><path d="M856.4,58.6 H867.6 L863.4,63.8 V69.2 H860.6 V63.8 Z" fill="none" stroke="#d9d9d9" stroke-width="1"/><polyline points="873.10,62.10 875.10,64.30 877.10,62.10" fill="none" stroke="#f0f0f0" stroke-width="1.15" stroke-linecap="round" stroke-linejoin="round"/><circle cx="906" cy="60" r="7.6" fill="none" stroke="#d9d9d9" stroke-width="1"/><line x1="900.7" y1="65.6" x2="892.9" y2="73.3" stroke="#d9d9d9" stroke-width="1"/><polyline points="919.20,62.10 921.00,64.10 922.80,62.10" fill="none" stroke="#f0f0f0" stroke-width="1.15" stroke-linecap="round" stroke-linejoin="round"/><rect x="964.6" y="51.8" width="23" height="22.4" fill="none" stroke="#bdbdbd" stroke-width="1"/><line x1="964.6" y1="55.2" x2="987.6" y2="55.2" stroke="#8a8a8a" stroke-width="0.8"/><line x1="964.6" y1="63" x2="987.6" y2="63" stroke="#8a8a8a" stroke-width="0.8"/><line x1="964.6" y1="68.6" x2="987.6" y2="68.6" stroke="#8a8a8a" stroke-width="0.8"/><line x1="970.6" y1="68.6" x2="970.6" y2="74.2" stroke="#8a8a8a" stroke-width="0.8"/><line x1="976.2" y1="68.6" x2="976.2" y2="74.2" stroke="#8a8a8a" stroke-width="0.8"/><line x1="981.8" y1="68.6" x2="981.8" y2="74.2" stroke="#8a8a8a" stroke-width="0.8"/><rect x="964.6" y="51.8" width="23" height="3.4" fill="#7a7a7a"/><circle cx="975.6" cy="60.6" r="7" fill="#2b2b2b" stroke="#d9d9d9" stroke-width="1"/><line x1="980.6" y1="65.6" x2="987.2" y2="73.8" stroke="#d9d9d9" stroke-width="1"/><rect x="971.8" y="59" width="2.2" height="5" fill="#9a9a9a"/><rect x="974.2" y="56.4" width="2.4" height="7.6" fill="#d0d0d0"/><rect x="976.8" y="58" width="2.4" height="6" fill="#3b9be0"/></svg>
<div class="t" style="left:11.90px;top:78.40px;font-size:8.5px;font-weight:normal;color:#e8e8e8;transform:scaleX(0.9278);-webkit-text-stroke:0.3px #e8e8e8;">Coller</div>
<div class="t" style="left:86.30px;top:58.55px;font-size:8.8px;font-weight:normal;color:#eaeaea;transform:scaleX(0.9803);-webkit-text-stroke:0.3px #eaeaea;letter-spacing:0.3px;">Calibri (Corps)</div>
<div class="t" style="left:190.80px;top:58.38px;font-size:9.0px;font-weight:normal;color:#eaeaea;transform:scaleX(0.9186);-webkit-text-stroke:0.3px #eaeaea;">12</div>
<div class="t" style="left:87.00px;top:79.11px;font-size:10.5px;font-weight:bold;color:#e0e0e0;transform:scaleX(0.8566);">G</div>
<div class="t" style="left:126.40px;top:79.13px;font-size:10px;font-weight:normal;color:#c8c8c8;transform:scaleX(0.8094);">S</div>
<div class="t" style="left:442.60px;top:58.05px;font-size:8.8px;font-weight:normal;color:#eaeaea;transform:scaleX(0.9655);-webkit-text-stroke:0.3px #eaeaea;letter-spacing:0.3px;">Personnalisée</div>
<div class="t" style="left:585.80px;top:54.23px;font-size:8px;font-weight:normal;color:#ececec;transform:scaleX(0.9441);-webkit-text-stroke:0.3px #ececec;letter-spacing:0.35px;">Mise en forme conditionnelle</div>
<div class="t" style="left:585.80px;top:70.23px;font-size:8px;font-weight:normal;color:#ececec;transform:scaleX(0.9529);-webkit-text-stroke:0.3px #ececec;letter-spacing:0.35px;">Mettre sous forme de tableau</div>
<div class="t" style="left:585.80px;top:86.03px;font-size:8px;font-weight:normal;color:#ececec;transform:scaleX(0.9284);-webkit-text-stroke:0.3px #ececec;letter-spacing:0.35px;">Styles de cellule</div>
<div class="t" style="left:738.60px;top:54.23px;font-size:8px;font-weight:normal;color:#ececec;transform:scaleX(0.9430);-webkit-text-stroke:0.3px #ececec;letter-spacing:0.35px;">Insérer</div>
<div class="t" style="left:738.60px;top:70.23px;font-size:8px;font-weight:normal;color:#ececec;transform:scaleX(0.9535);-webkit-text-stroke:0.3px #ececec;letter-spacing:0.35px;">Supprimer</div>
<div class="t" style="left:738.60px;top:86.03px;font-size:8px;font-weight:normal;color:#ececec;transform:scaleX(0.9451);-webkit-text-stroke:0.3px #ececec;letter-spacing:0.35px;">Mise en forme</div>
<div class="t" style="left:849.00px;top:78.70px;font-size:7.8px;font-weight:normal;color:#ececec;transform:scaleX(0.9510);-webkit-text-stroke:0.3px #ececec;letter-spacing:0.3px;">Trier et</div>
<div class="t" style="left:851.00px;top:87.20px;font-size:7.8px;font-weight:normal;color:#ececec;transform:scaleX(1.0444);-webkit-text-stroke:0.3px #ececec;letter-spacing:0.3px;">filtrer</div>
<div class="t" style="left:882.20px;top:78.60px;font-size:7.8px;font-weight:normal;color:#ececec;transform:scaleX(0.9683);-webkit-text-stroke:0.3px #ececec;letter-spacing:0.3px;">Rechercher et</div>
<div class="t" style="left:885.30px;top:87.30px;font-size:7.8px;font-weight:normal;color:#ececec;transform:scaleX(0.9725);-webkit-text-stroke:0.3px #ececec;letter-spacing:0.3px;">sélectionner</div>
<div class="t" style="left:959.50px;top:78.60px;font-size:7.8px;font-weight:normal;color:#ececec;transform:scaleX(0.9588);-webkit-text-stroke:0.3px #ececec;letter-spacing:0.3px;">Analyser</div>
<div class="t" style="left:952.70px;top:87.30px;font-size:7.8px;font-weight:normal;color:#ececec;transform:scaleX(0.9614);-webkit-text-stroke:0.3px #ececec;letter-spacing:0.3px;">des données</div>
<svg style="left:0;top:0" width="1024" height="122"><path d="M233.6,11.8 L238.6,7.2 L243.6,11.8 V17.6 H240.6 V13.6 H236.6 V17.6 H233.6 Z" fill="none" stroke="#e4e4e4" stroke-width="1.1" stroke-linejoin="round"/><path d="M253.4,7.4 H261.6 L264,9.8 V17.6 H253.4 Z" fill="none" stroke="#e4e4e4" stroke-width="1.1" stroke-linejoin="round"/><path d="M255.8,7.6 V10.6 H260.8 V7.6 M255.4,17.4 V13.2 H262 V17.4" fill="none" stroke="#e4e4e4" stroke-width="1"/><path d="M277.8,17.6 H273.2 V7.4 H281.4 L283.8,9.8 V11.6" fill="none" stroke="#e4e4e4" stroke-width="1.1" stroke-linejoin="round"/><path d="M275.6,7.6 V10.6 H280.6 V7.6 M275.2,17.4 V13.2 H278" fill="none" stroke="#e4e4e4" stroke-width="1"/><path d="M278.6,17.8 L279.4,15.2 L284.2,10.6 L285.6,12 L280.8,16.8 Z" fill="#e4e4e4"/><path d="M294.8,11 Q298,7.4 301.4,9 Q304,11 300.4,14.4 L295.6,18" fill="none" stroke="#7a7a7a" stroke-width="1.1"/><path d="M293.4,8 L294.8,11.4 L298.2,10.6" fill="none" stroke="#7a7a7a" stroke-width="1.1"/><polyline points="310.2,11.6 312.2,13.6 314.2,11.6" fill="none" stroke="#8a8a8a" stroke-width="0.9"/><path d="M331.6,9.6 A5.6,5.6 0 1 0 332.4,14" fill="none" stroke="#e4e4e4" stroke-width="1.2"/><path d="M329,8.6 L332,9.8 L332.4,6.6" fill="none" stroke="#e4e4e4" stroke-width="1.1"/><circle cx="342.6" cy="12.4" r="0.95" fill="#e4e4e4"/><circle cx="347" cy="12.4" r="0.95" fill="#e4e4e4"/><circle cx="351.4" cy="12.4" r="0.95" fill="#e4e4e4"/><path d="M364.9,7 H370.4 L373.2,9.8 V18 H364.9 Z" fill="#f4f4f4"/><rect x="363" y="10" width="6.4" height="4.9" rx="0.6" fill="#1a8a48"/><rect x="371" y="11.4" width="1" height="2.4" fill="#1a8a48"/><path d="M364.6,11 L367.4,14 M367.4,11 L364.6,14" stroke="#e8f4ec" stroke-width="0.8"/><polyline points="684.6,11.4 687.7,14 690.8,11.4" fill="none" stroke="#8a8a8a" stroke-width="0.9"/><path d="M555,36.2 Q553.2,34.6 553.4,32.4 A3.5,3.5 0 0 1 560.2,32.4 Q560.4,34.6 558.6,36.2 V37.6 H555 Z" fill="none" stroke="#d8d8d8" stroke-width="0.9"/><line x1="555.4" y1="38.8" x2="558.2" y2="38.8" stroke="#d8d8d8" stroke-width="0.9"/><circle cx="982.8" cy="11.2" r="4.3" fill="none" stroke="#e4e4e4" stroke-width="1.1"/><line x1="985.8" y1="14.4" x2="989.6" y2="18.2" stroke="#e4e4e4" stroke-width="1.1"/><circle cx="1007.4" cy="11.6" r="2.3" fill="none" stroke="#e4e4e4" stroke-width="1"/><path d="M1003.4,18.4 Q1003.4,14.8 1007.4,14.8 Q1011.4,14.8 1011.4,18.4 Z" fill="none" stroke="#e4e4e4" stroke-width="1"/><path d="M1011,7 H1015.8 V10.6 H1013.6 L1012.2,12 V10.6 H1011 Z" fill="none" stroke="#e4e4e4" stroke-width="0.9"/><rect x="862.2" y="27.2" width="60.6" height="17.5" rx="3" fill="#555555"/><rect x="930.1" y="27.2" width="86.7" height="17.5" rx="3" fill="#555555"/><path d="M869,34.6 V39.6 H877 V37.4" fill="none" stroke="#e4e4e4" stroke-width="0.9"/><path d="M871.6,38 Q872.4,34.4 876.2,34.2 M874.6,32.6 L876.6,34.2 L874.8,35.8" fill="none" stroke="#e4e4e4" stroke-width="0.9"/><path d="M937.4,32.4 H945.6 V37.8 H941 L939.4,39.8 V37.8 H937.4 Z" fill="none" stroke="#e4e4e4" stroke-width="1"/><polygon points="53.5,104.6 51,108.8 56,108.8" fill="#bcbcbc"/><polygon points="53.5,117.1 51,113.2 56,113.2" fill="#bcbcbc"/><line x1="60.5" y1="101" x2="60.5" y2="119.5" stroke="#1a1a1a" stroke-width="1"/><path d="M71.6,107.8 L78.4,114.6 M78.4,107.8 L71.6,114.6" stroke="#5e5e5e" stroke-width="1.8"/><path d="M92.2,110.6 L95.4,113.8 L101.6,107.4" fill="none" stroke="#5e5e5e" stroke-width="1.8"/><text x="113.2" y="115" font-family="Liberation Serif" font-style="italic" font-size="13.5" fill="#a8a8a8">f</text><text x="118.2" y="114.7" font-family="Liberation Sans" font-size="8.4" fill="#a8a8a8" stroke="#a8a8a8" stroke-width="0.2">x</text><polygon points="1015.8,108.8 1020.8,108.8 1018.3,112.8" fill="#c8c8c8"/></svg>
<div class="t" style="left:882.00px;top:31.98px;font-size:9px;font-weight:bold;color:#f0f0f0;transform:scaleX(0.9937);">Partager</div>
<div class="t" style="left:949.90px;top:31.98px;font-size:9px;font-weight:bold;color:#f0f0f0;transform:scaleX(0.9867);">Commentaires</div>
</body></html>
